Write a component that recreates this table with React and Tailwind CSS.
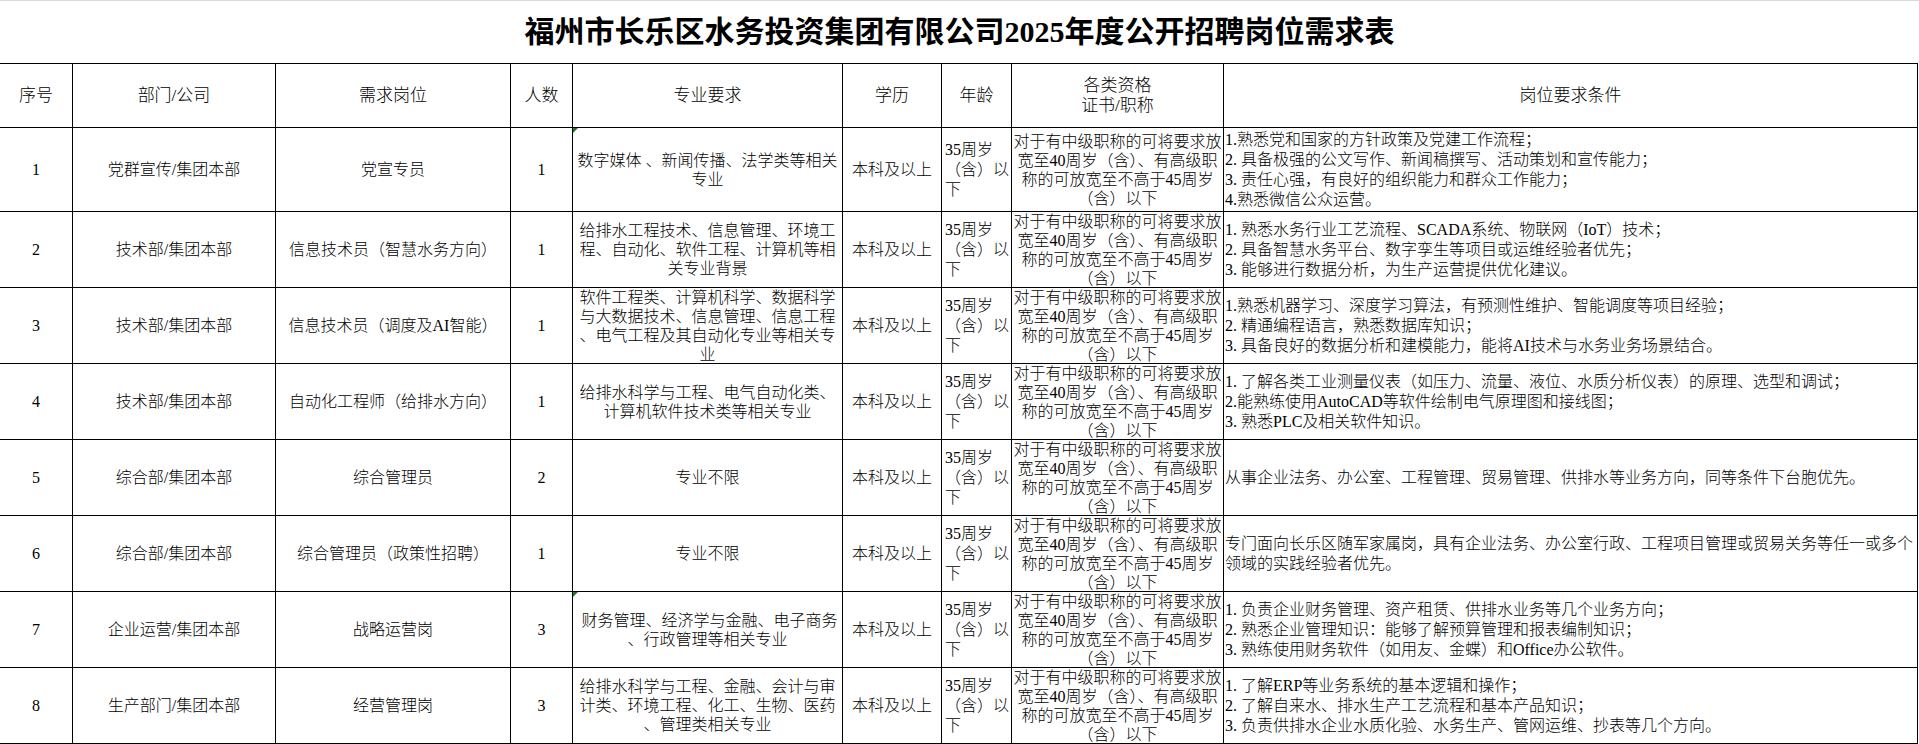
import React from 'react';

const COLS = 'grid grid-cols-[73px_203px_235px_62px_270px_99px_70px_212px_694px]';

const AGE = ['35周岁', '（含）以', '下'];
const QUAL = ['对于有中级职称的可将要求放', '宽至40周岁（含）、有高级职', '称的可放宽至不高于45周岁', '（含）以下'];

const rows = [
  {
    no: '1', dept: '党群宣传/集团本部', post: '党宣专员', count: '1', tri: true, tall: true,
    major: ['数字媒体 、新闻传播、法学类等相关', '专业'],
    req: [
      '1.熟悉党和国家的方针政策及党建工作流程；',
      '2. 具备极强的公文写作、新闻稿撰写、活动策划和宣传能力；',
      '3. 责任心强，有良好的组织能力和群众工作能力；',
      '4.熟悉微信公众运营。',
    ],
  },
  {
    no: '2', dept: '技术部/集团本部', post: '信息技术员（智慧水务方向）', count: '1',
    major: ['给排水工程技术、信息管理、环境工', '程、自动化、软件工程、计算机等相', '关专业背景'],
    req: [
      '1. 熟悉水务行业工艺流程、SCADA系统、物联网（IoT）技术；',
      '2. 具备智慧水务平台、数字孪生等项目或运维经验者优先；',
      '3. 能够进行数据分析，为生产运营提供优化建议。',
    ],
  },
  {
    no: '3', dept: '技术部/集团本部', post: '信息技术员（调度及AI智能）', count: '1',
    major: ['软件工程类、计算机科学、数据科学', '与大数据技术、信息管理、信息工程', '、电气工程及其自动化专业等相关专', '业'],
    req: [
      '1.熟悉机器学习、深度学习算法，有预测性维护、智能调度等项目经验；',
      '2. 精通编程语言，熟悉数据库知识；',
      '3. 具备良好的数据分析和建模能力，能将AI技术与水务业务场景结合。',
    ],
  },
  {
    no: '4', dept: '技术部/集团本部', post: '自动化工程师（给排水方向）', count: '1',
    major: ['给排水科学与工程、电气自动化类、', '计算机软件技术类等相关专业'],
    req: [
      '1. 了解各类工业测量仪表（如压力、流量、液位、水质分析仪表）的原理、选型和调试；',
      '2.能熟练使用AutoCAD等软件绘制电气原理图和接线图；',
      '3. 熟悉PLC及相关软件知识。',
    ],
  },
  {
    no: '5', dept: '综合部/集团本部', post: '综合管理员', count: '2',
    major: ['专业不限'],
    req: ['从事企业法务、办公室、工程管理、贸易管理、供排水等业务方向，同等条件下台胞优先。'],
  },
  {
    no: '6', dept: '综合部/集团本部', post: '综合管理员（政策性招聘）', count: '1',
    major: ['专业不限'],
    req: ['专门面向长乐区随军家属岗，具有企业法务、办公室行政、工程项目管理或贸易关务等任一或多个', '领域的实践经验者优先。'],
  },
  {
    no: '7', dept: '企业运营/集团本部', post: '战略运营岗', count: '3', tri: true,
    major: [' 财务管理、经济学与金融、电子商务', '、行政管理等相关专业'],
    req: [
      '1. 负责企业财务管理、资产租赁、供排水业务等几个业务方向；',
      '2. 熟悉企业管理知识：能够了解预算管理和报表编制知识；',
      '3. 熟练使用财务软件（如用友、金蝶）和Office办公软件。',
    ],
  },
  {
    no: '8', dept: '生产部门/集团本部', post: '经营管理岗', count: '3',
    major: ['给排水科学与工程、金融、会计与审', '计类、环境工程、化工、生物、医药', '、管理类相关专业'],
    req: [
      '1. 了解ERP等业务系统的基本逻辑和操作；',
      '2. 了解自来水、排水生产工艺流程和基本产品知识；',
      '3. 负责供排水企业水质化验、水务生产、管网运维、抄表等几个方向。',
    ],
  },
];

const cell = 'border-r border-b border-black overflow-hidden flex items-center';

function Lines({ lines, lh = 'leading-[19px]' }) {
  return (
    <div className={lh}>
      {lines.map((t, i) => (
        <div key={i} className="whitespace-pre">{t}</div>
      ))}
    </div>
  );
}

export default function App() {
  return (
    <div
      className="w-[1919px] h-[744px] bg-white text-black overflow-hidden"
      style={{ fontFamily: '"Liberation Serif", "Noto Sans CJK SC", serif' }}
    >
      {/* 标题 */}
      <div className="h-[63px] border-t border-[#dadada] flex items-center justify-center">
        <h1 className="text-[30px] font-bold leading-none">
          福州市长乐区水务投资集团有限公司2025年度公开招聘岗位需求表
        </h1>
      </div>

      <div className="w-[1918px] border-t border-black text-[16px] font-light">
        {/* 表头 */}
        <div className={`${COLS} h-[64px] text-[17px]`}>
          <div className={`${cell} justify-center`}>序号</div>
          <div className={`${cell} justify-center`}>部门/公司</div>
          <div className={`${cell} justify-center`}>需求岗位</div>
          <div className={`${cell} justify-center`}>人数</div>
          <div className={`${cell} justify-center`}>专业要求</div>
          <div className={`${cell} justify-center`}>学历</div>
          <div className={`${cell} justify-center`}>年龄</div>
          <div className={`${cell} justify-center text-center leading-[20px]`}>
            <div>各类资格<br />证书/职称</div>
          </div>
          <div className={`${cell} justify-center`}>岗位要求条件</div>
        </div>

        {rows.map((r) => (
          <div key={r.no} className={`${COLS} ${r.tall ? 'h-[84px]' : 'h-[76px]'}`}>
            <div className={`${cell} justify-center`}>{r.no}</div>
            <div className={`${cell} justify-center`}>{r.dept}</div>
            <div className={`${cell} justify-center`}>{r.post}</div>
            <div className={`${cell} justify-center`}>{r.count}</div>
            <div className={`${cell} justify-center text-center relative`}>
              {r.tri && (
                <span className="absolute left-0 top-0 w-0 h-0 border-t-[5px] border-r-[5px] border-t-[#1f7a2e] border-r-transparent" />
              )}
              <Lines lines={r.major} />
            </div>
            <div className={`${cell} justify-center`}>本科及以上</div>
            <div className={`${cell} justify-start pl-[3px]`}>
              <Lines lines={AGE} lh="leading-[20px]" />
            </div>
            <div className={`${cell} justify-center text-center`}>
              <Lines lines={QUAL} />
            </div>
            <div className={`${cell} justify-start pl-[1px]`}>
              <Lines lines={r.req} lh="leading-[20px]" />
            </div>
          </div>
        ))}
      </div>
    </div>
  );
}
